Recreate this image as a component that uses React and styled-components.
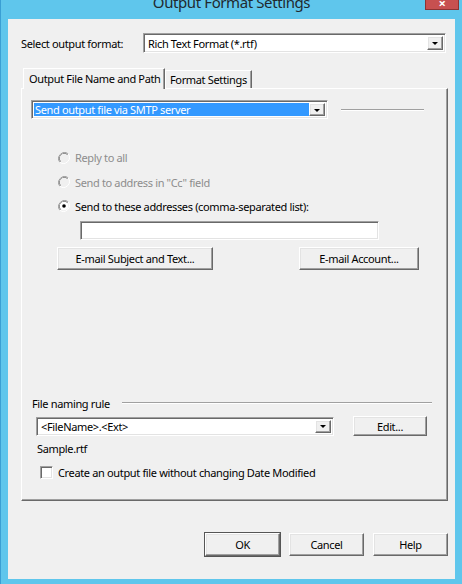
import React from 'react';
import styled, { createGlobalStyle, css } from 'styled-components';

const GlobalStyle = createGlobalStyle`
  html, body { margin: 0; padding: 0; background: #5fc6ec; }
  body {
    font-family: "Noto Sans", "Open Sans", sans-serif;
    font-size: 11px;
    letter-spacing: -0.35px;
    color: #000;
  }
  * { box-sizing: border-box; }
`;

const sunken = css`
  border: 1px solid;
  border-color: #a0a0a0 #ffffff #ffffff #a0a0a0;
  box-shadow: inset 1px 1px 0 #696969, inset -1px -1px 0 #e3e3e3;
`;

const raised = css`
  border: 1px solid;
  border-color: #ffffff #696969 #696969 #ffffff;
  box-shadow: inset -1px -1px 0 #a0a0a0, inset 1px 1px 0 #e3e3e3;
`;

const Window = styled.div`
  width: 462px;
  height: 584px;
  background: #5fc6ec;
  border-left: 1px solid #3a9fd4;
  display: flex;
  flex-direction: column;
  overflow: hidden;
`;

const TitleBar = styled.div`
  height: 19px;
  display: grid;
  grid-template-columns: 1fr auto 1fr;
  align-items: start;
  overflow: hidden;
`;

const Title = styled.div`
  grid-column: 2;
  font-size: 15px;
  line-height: 15px;
  letter-spacing: -0.4px;
  margin-top: -5px;
  color: #1f2a30;
  white-space: nowrap;
`;

const CloseButton = styled.div`
  grid-column: 3;
  justify-self: end;
  margin-right: 3px;
  width: 34px;
  height: 10px;
  background: #c75050;
  border: 1px solid #8c3434;
  border-top: none;
  color: #fff;
  font-size: 13px;
  font-weight: bold;
  line-height: 6px;
  text-align: center;
  overflow: hidden;
`;

const Client = styled.div`
  flex: 1;
  margin: 0 7px 5px 7px;
  background: #f0f0f0;
  display: flex;
  flex-direction: column;
  padding: 14px 7px 0 13px;
`;

const FormatRow = styled.div`
  display: flex;
  align-items: center;
  height: 20px;
`;

const Label = styled.span`
  width: ${p => p.$w || 'auto'}px;
  white-space: nowrap;
`;

const Combo = styled.div`
  ${sunken};
  width: ${p => p.$w}px;
  height: ${p => p.$h || 19}px;
  background: #fff;
  display: flex;
  align-items: stretch;
  padding: 2px;
`;

const ComboText = styled.div`
  flex: 1;
  display: flex;
  align-items: center;
  padding-left: ${p => (p.$selected ? 1 : 2)}px;
  background: ${p => (p.$selected ? '#3399ff' : 'transparent')};
  color: ${p => (p.$selected ? '#fff' : '#000')};
  white-space: nowrap;
  overflow: hidden;
`;

const DropButton = styled.div`
  ${raised};
  width: 16px;
  background: #f0f0f0;
  display: flex;
  align-items: center;
  justify-content: center;
  &::after {
    content: '';
    border-left: 3px solid transparent;
    border-right: 3px solid transparent;
    border-top: 3px solid #000;
    margin-top: 1px;
  }
`;

const TabStrip = styled.div`
  margin-top: 15px;
  display: flex;
  align-items: flex-end;
  padding-left: 2px;
  height: 20px;
`;

const Tab = styled.div`
  position: relative;
  z-index: ${p => (p.$active ? 1 : 0)};
  height: ${p => (p.$active ? 21 : 18)}px;
  margin-bottom: ${p => (p.$active ? -1 : 0)}px;
  width: ${p => p.$w}px;
  background: #f0f0f0;
  border: 1px solid;
  border-bottom: none;
  border-color: #ffffff #696969 #696969 #ffffff;
  box-shadow: inset -1px 0 0 #a0a0a0;
  display: flex;
  align-items: ${p => (p.$active ? 'flex-start' : 'center')};
  padding: ${p => (p.$active ? '2px 0 0 5px' : '0 0 0 4px')};
  white-space: nowrap;
`;

const Panel = styled.div`
  width: 427px;
  height: 413px;
  border: 1px solid;
  border-color: #ffffff #696969 #696969 #ffffff;
  box-shadow: inset -1px -1px 0 #a0a0a0;
  display: flex;
  flex-direction: column;
`;

const SmtpRow = styled.div`
  margin: 11px 0 0 9px;
  display: flex;
  align-items: center;
`;

const Rule = styled.div`
  height: 2px;
  border-top: 1px solid #a0a0a0;
  border-bottom: 1px solid #ffffff;
  width: ${p => (p.$w ? `${p.$w}px` : 'auto')};
  flex: ${p => (p.$w ? 'none' : 1)};
  margin-left: ${p => p.$ml}px;
`;

const RadioGroup = styled.div`
  margin: 26px 0 0 36px;
  display: flex;
  flex-direction: column;
`;

const RadioRow = styled.label`
  height: ${p => p.$h}px;
  display: flex;
  align-items: center;
  gap: 5px;
  color: ${p => (p.$disabled ? '#8d8d8d' : '#000')};
  white-space: nowrap;
`;

const AddressInput = styled.div`
  ${sunken};
  margin: 3px 0 0 58px;
  width: 299px;
  height: 19px;
  background: #fff;
`;

const ButtonRow = styled.div`
  display: flex;
  align-items: center;
  gap: ${p => p.$gap}px;
  margin: ${p => p.$m};
`;

const Button = styled.div`
  ${raised};
  width: ${p => p.$w}px;
  height: ${p => p.$h || 23}px;
  background: #f0f0f0;
  display: flex;
  align-items: center;
  justify-content: center;
  white-space: nowrap;
  ${p =>
    p.$default &&
    css`
      outline: 1px solid #555;
    `}
`;

const NamingHeader = styled.div`
  margin: 126px 0 0 10px;
  width: 400px;
  height: 14px;
  display: flex;
  align-items: center;
`;

const NamingRow = styled.div`
  margin: 6px 0 0 14px;
  display: flex;
  align-items: center;
`;

const SampleText = styled.div`
  margin: 5px 0 0 15px;
  height: 14px;
  display: flex;
  align-items: center;
`;

const CheckRow = styled.label`
  margin: 10px 0 0 18px;
  display: flex;
  align-items: center;
  gap: 5px;
  white-space: nowrap;
`;

const CheckBox = styled.span`
  ${sunken};
  width: 13px;
  height: 13px;
  background: #fff;
  flex: none;
`;

const BottomBar = styled.div`
  margin-top: 32px;
  display: flex;
  justify-content: flex-end;
  gap: 9px;
`;

function Radio({ checked, disabled }) {
  const fill = disabled ? '#f0f0f0' : '#ffffff';
  return (
    <svg width="12" height="12" viewBox="0 0 12 12" style={{ flex: 'none' }}>
      <path d="M10.2 1.8 A6 6 0 0 0 1.8 10.2" fill="none" stroke="#a0a0a0" strokeWidth="1" />
      <path d="M1.8 10.2 A6 6 0 0 0 10.2 1.8" fill="none" stroke="#ffffff" strokeWidth="1" />
      <path d="M9.5 2.5 A5 5 0 0 0 2.5 9.5" fill="none" stroke="#696969" strokeWidth="1" />
      <circle cx="6" cy="6" r="4.3" fill={fill} />
      {checked && <circle cx="6" cy="6" r="1.8" fill="#000" />}
    </svg>
  );
}

export default function App() {
  return (
    <>
      <GlobalStyle />
      <Window>
        <TitleBar>
          <Title>Output Format Settings</Title>
          <CloseButton>×</CloseButton>
        </TitleBar>
        <Client>
          <FormatRow>
            <Label $w={122}>Select output format:</Label>
            <Combo $w={303} $h={20}>
              <ComboText>Rich Text Format (*.rtf)</ComboText>
              <DropButton />
            </Combo>
          </FormatRow>

          <TabStrip>
            <Tab $active $w={142}>Output File Name and Path</Tab>
            <Tab $w={87}>Format Settings</Tab>
          </TabStrip>

          <Panel>
            <SmtpRow>
              <Combo $w={297} $h={19}>
                <ComboText $selected>Send output file via SMTP server</ComboText>
                <DropButton />
              </Combo>
              <Rule $w={83} $ml={13} />
            </SmtpRow>

            <RadioGroup>
              <RadioRow $h={25} $disabled>
                <Radio disabled />
                Reply to all
              </RadioRow>
              <RadioRow $h={24} $disabled>
                <Radio disabled />
                Send to address in "Cc" field
              </RadioRow>
              <RadioRow $h={24}>
                <Radio checked />
                Send to these addresses (comma-separated list):
              </RadioRow>
            </RadioGroup>

            <AddressInput />

            <ButtonRow $gap={86} $m="7px 0 0 35px">
              <Button $w={156}>E-mail Subject and Text...</Button>
              <Button $w={120}>E-mail Account...</Button>
            </ButtonRow>

            <NamingHeader>
              <Label>File naming rule</Label>
              <Rule $ml={12} />
            </NamingHeader>

            <NamingRow>
              <Combo $w={298} $h={19}>
                <ComboText>&lt;FileName&gt;.&lt;Ext&gt;</ComboText>
                <DropButton />
              </Combo>
              <ButtonRow $gap={0} $m="0 0 0 19px">
                <Button $w={74} $h={20}>Edit...</Button>
              </ButtonRow>
            </NamingRow>

            <SampleText>Sample.rtf</SampleText>

            <CheckRow>
              <CheckBox />
              Create an output file without changing Date Modified
            </CheckRow>
          </Panel>

          <BottomBar>
            <Button $w={75} $default>OK</Button>
            <Button $w={75}>Cancel</Button>
            <Button $w={75}>Help</Button>
          </BottomBar>
        </Client>
      </Window>
    </>
  );
}
